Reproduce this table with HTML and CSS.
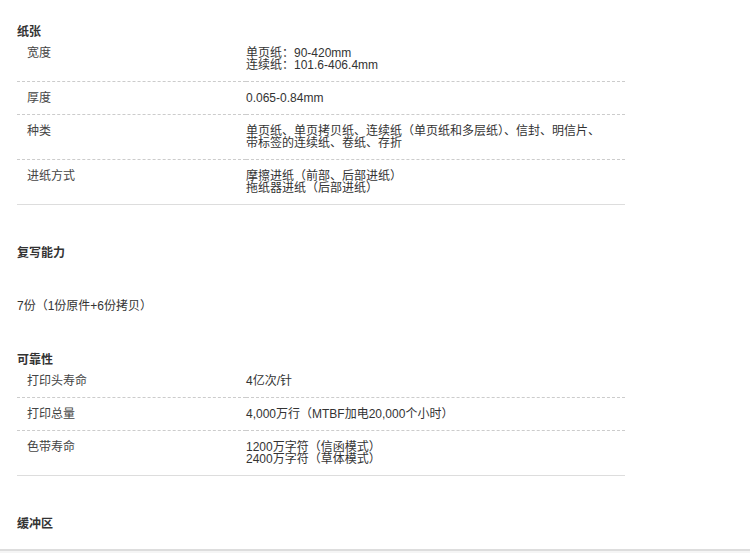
FILE: index.html
```html
<!DOCTYPE html>
<html lang="zh-CN">
<head>
    <meta charset="UTF-8">
    <meta name="viewport" content="width=device-width, initial-scale=1.0">
    <title>规格参数</title>
    <link rel="stylesheet" href="styles.css">
</head>
<body>
    <div class="specs">
        <div class="section">
            <h3 class="section-title">纸张</h3>
            <table class="spec-table">
                <tr>
                    <td class="spec-name">宽度</td>
                    <td class="spec-value">单页纸：90-420mm<br>连续纸：101.6-406.4mm</td>
                </tr>
                <tr>
                    <td class="spec-name">厚度</td>
                    <td class="spec-value">0.065-0.84mm</td>
                </tr>
                <tr>
                    <td class="spec-name">种类</td>
                    <td class="spec-value">单页纸、单页拷贝纸、连续纸（单页纸和多层纸）、信封、明信片、<br>带标签的连续纸、卷纸、存折</td>
                </tr>
                <tr>
                    <td class="spec-name">进纸方式</td>
                    <td class="spec-value">摩擦进纸（前部、后部进纸）<br>拖纸器进纸（后部进纸）</td>
                </tr>
            </table>
        </div>

        <div class="section">
            <h3 class="section-title">复写能力</h3>
            <p class="section-text">7份（1份原件+6份拷贝）</p>
        </div>

        <div class="section">
            <h3 class="section-title">可靠性</h3>
            <table class="spec-table">
                <tr>
                    <td class="spec-name">打印头寿命</td>
                    <td class="spec-value">4亿次/针</td>
                </tr>
                <tr>
                    <td class="spec-name">打印总量</td>
                    <td class="spec-value">4,000万行（MTBF加电20,000个小时）</td>
                </tr>
                <tr>
                    <td class="spec-name">色带寿命</td>
                    <td class="spec-value">1200万字符（信函模式）<br>2400万字符（草体模式）</td>
                </tr>
            </table>
        </div>

        <div class="section">
            <h3 class="section-title">缓冲区</h3>
        </div>
    </div>
    <div class="footer-bar"></div>
</body>
</html>
```

FILE: styles.css
```css
body {
    margin: 0;
    background-color: #fff;
    font-family: "Liberation Sans", "Noto Sans CJK SC", sans-serif;
    font-size: 12px;
    color: #333;
}
.specs {
    width: 608px;
    padding: 26px 0 0 17px;
    height: 523px;
    overflow: hidden;
}
.section {
    margin-bottom: 42px;
}
.section-title {
    margin: 0;
    font-size: 12px;
    line-height: 12px;
    font-weight: bold;
    color: #333;
}
.section-text {
    margin: 41px 0 0;
    line-height: 12px;
}
.spec-table {
    width: 100%;
    margin-top: -1px;
    border-collapse: collapse;
}
.spec-table td {
    padding: 10px 0;
    line-height: 12px;
    vertical-align: top;
    border-bottom: 1px dashed #ccc;
}
.spec-table tr:last-child td {
    border-bottom: 1px solid #ddd;
}
.spec-name {
    width: 219px;
    padding-left: 10px !important;
    color: #444;
}
.spec-value {
    color: #333;
}
.footer-bar {
    height: 2px;
    border-top: 2px solid #ddd;
    background-color: #f5f5f5;
}
```
